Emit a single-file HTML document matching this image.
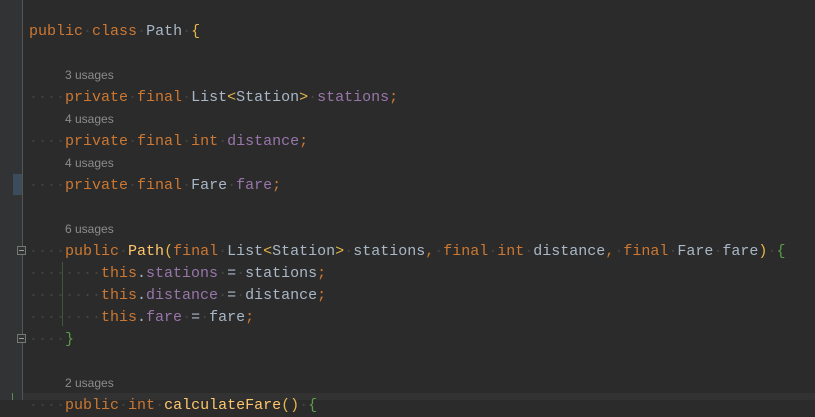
<!DOCTYPE html>
<html><head><meta charset="utf-8"><style>
html,body{margin:0;padding:0;width:815px;height:400px;overflow:hidden;background:#2b2b2b}
.g{position:absolute;left:0;top:0;width:22px;height:400px;background:#313335}
.gl{position:absolute;left:22px;top:0;width:1px;height:400px;background:#555}
.l{position:absolute;left:29px;height:22px;line-height:22px;font-family:"Liberation Mono",monospace;font-size:15px;color:#a9b7c6;white-space:pre}
.h{position:absolute;left:65px;height:22px;line-height:22px;font-family:"Liberation Sans",sans-serif;font-size:12px;color:#8c8c8c}
.d{color:#444}.k{color:#cc7832}.f{color:#9876aa}.y{color:#e5b74a}.m{color:#ffc66d}.gr{color:#5a9e4a}
.fold{position:absolute;left:17px;width:9px;height:9px;border:1px solid #777;background:#313335;box-sizing:border-box}
.fold:after{content:"";position:absolute;left:1px;top:3px;width:5px;height:1px;background:#999}
</style></head><body>
<div class="g"></div><div class="gl"></div>
<div style="position:absolute;left:13px;top:174px;width:9px;height:21px;background:#3d4c5a"></div>
<div style="position:absolute;left:23px;top:393px;width:792px;height:7px;background:#323232"></div>
<div style="position:absolute;left:12px;top:393px;width:1px;height:7px;background:#5a8a5a"></div>
<div style="position:absolute;left:62px;top:262px;width:1px;height:64px;background:#3e5a3e"></div>
<div class="fold" style="top:246px"></div>
<div class="fold" style="top:334px"></div>

<div class="l" style="top:21px"><span class="k">public</span><span class="d">·</span><span class="k">class</span><span class="d">·</span>Path<span class="d">·</span><span class="y">{</span></div>
<div class="h" style="top:64px">3 usages</div>
<div class="l" style="top:87px"><span class="d">····</span><span class="k">private</span><span class="d">·</span><span class="k">final</span><span class="d">·</span>List<span class="y">&lt;</span>Station<span class="y">&gt;</span><span class="d">·</span><span class="f">stations</span><span class="k">;</span></div>
<div class="h" style="top:108px">4 usages</div>
<div class="l" style="top:131px"><span class="d">····</span><span class="k">private</span><span class="d">·</span><span class="k">final</span><span class="d">·</span><span class="k">int</span><span class="d">·</span><span class="f">distance</span><span class="k">;</span></div>
<div class="h" style="top:152px">4 usages</div>
<div class="l" style="top:175px"><span class="d">····</span><span class="k">private</span><span class="d">·</span><span class="k">final</span><span class="d">·</span>Fare<span class="d">·</span><span class="f">fare</span><span class="k">;</span></div>
<div class="h" style="top:218px">6 usages</div>
<div class="l" style="top:241px"><span class="d">····</span><span class="k">public</span><span class="d">·</span><span class="m">Path</span><span class="y">(</span><span class="k">final</span><span class="d">·</span>List<span class="y">&lt;</span>Station<span class="y">&gt;</span><span class="d">·</span>stations<span class="k">,</span><span class="d">·</span><span class="k">final</span><span class="d">·</span><span class="k">int</span><span class="d">·</span>distance<span class="k">,</span><span class="d">·</span><span class="k">final</span><span class="d">·</span>Fare<span class="d">·</span>fare<span class="y">)</span><span class="d">·</span><span class="gr">{</span></div>
<div class="l" style="top:263px"><span class="d">········</span><span class="k">this</span>.<span class="f">stations</span><span class="d">·</span>=<span class="d">·</span>stations<span class="k">;</span></div>
<div class="l" style="top:285px"><span class="d">········</span><span class="k">this</span>.<span class="f">distance</span><span class="d">·</span>=<span class="d">·</span>distance<span class="k">;</span></div>
<div class="l" style="top:307px"><span class="d">········</span><span class="k">this</span>.<span class="f">fare</span><span class="d">·</span>=<span class="d">·</span>fare<span class="k">;</span></div>
<div class="l" style="top:329px"><span class="d">····</span><span class="gr">}</span></div>
<div class="h" style="top:372px">2 usages</div>
<div class="l" style="top:395px"><span class="d">····</span><span class="k">public</span><span class="d">·</span><span class="k">int</span><span class="d">·</span><span class="m">calculateFare</span><span class="y">()</span><span class="d">·</span><span class="gr">{</span></div>
</body></html>
